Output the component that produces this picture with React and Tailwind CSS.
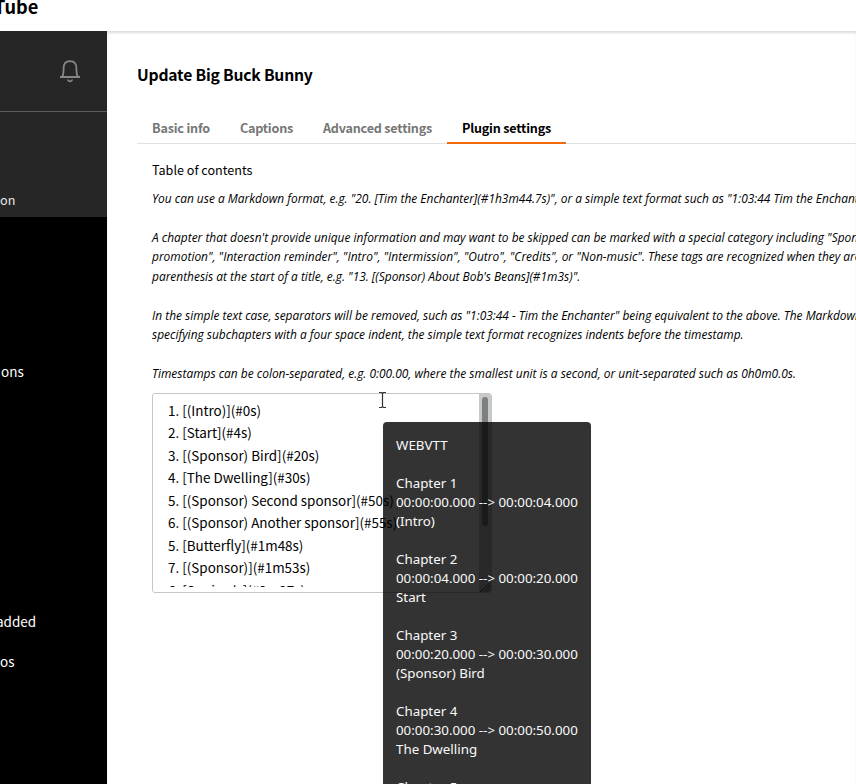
const tabs = [
  { label: "Basic info", width: "w-[88px]" },
  { label: "Captions", width: "w-[83px]" },
  { label: "Advanced settings", width: "w-[139px]" },
  { label: "Plugin settings", width: "w-[119px]", active: true },
];

const help = [
  { text: 'You can use a Markdown format, e.g. "20. [Tim the Enchanter](#1h3m44.7s)", or a simple text format such as "1:03:44 Tim the Enchanter".' },
  { text: "" },
  { text: 'A chapter that doesn\'t provide unique information and may want to be skipped can be marked with a special category including "Sponsor",' },
  { text: 'promotion", "Interaction reminder", "Intro", "Intermission", "Outro", "Credits", or "Non-music". These tags are recognized when they are' },
  { text: 'parenthesis at the start of a title, e.g. "13. [(Sponsor) About Bob\'s Beans](#1m3s)".' },
  { text: "" },
  { text: 'In the simple text case, separators will be removed, such as "1:03:44 - Tim the Enchanter" being equivalent to the above. The Markdown' },
  { text: "specifying subchapters with a four space indent, the simple text format recognizes indents before the timestamp." },
  { text: "" },
  { text: "Timestamps can be colon-separated, e.g. 0:00.00, where the smallest unit is a second, or unit-separated such as 0h0m0.0s." },
];

const chapters = [
  "1. [(Intro)](#0s)",
  "2. [Start](#4s)",
  "3. [(Sponsor) Bird](#20s)",
  "4. [The Dwelling](#30s)",
  "5. [(Sponsor) Second sponsor](#50s)",
  "6. [(Sponsor) Another sponsor](#55s)",
  "5. [Butterfly](#1m48s)",
  "7. [(Sponsor)](#1m53s)",
  "6. [Squirrels](#2m27s)",
];

const vtt = `WEBVTT

Chapter 1
00:00:00.000 --> 00:00:04.000
(Intro)

Chapter 2
00:00:04.000 --> 00:00:20.000
Start

Chapter 3
00:00:20.000 --> 00:00:30.000
(Sponsor) Bird

Chapter 4
00:00:30.000 --> 00:00:50.000
The Dwelling

Chapter 5`;

function Sidebar() {
  return (
    <aside className="flex w-[107px] shrink-0 flex-col bg-black text-[13.5px] text-white">
      <div className="h-[186px] bg-[#262626]">
        <div className="flex h-[81px] items-start justify-end border-b border-[#5c5c5c] pt-7 pr-[26px]">
          <svg width="22" height="24" viewBox="0 0 22 24" fill="none" stroke="#868686" strokeWidth="1.8">
            <path d="M1 18H21M3.2 17.6C4.6 15.5 4.6 13 4.6 9.5C4.6 5 7 2.2 11 2.2S17.4 5 17.4 9.5C17.4 13 17.4 15.5 18.8 17.6" />
            <path d="M8 20.6C8.5 24.2 13.5 24.2 14 20.6H12.4C12 21.9 10 21.9 9.6 20.6Z" fill="#868686" stroke="none" />
          </svg>
        </div>
        <div className="mt-[78px] h-5 text-[12.6px] leading-5 text-[#e6e6e6]">on</div>
      </div>
      <div className="mt-[144px] ml-[1px] h-5 leading-5">ons</div>
      <div className="mt-[230px] -ml-[4px] h-5 leading-5">added</div>
      <div className="mt-5 h-5 leading-5">os</div>
    </aside>
  );
}

function Editor() {
  return (
    <div className="relative ml-[15px] mt-[9px] flex h-[200px] w-[340px] overflow-hidden rounded-[3px] border border-[#c6c6c6] bg-white">
      <div className="mt-[5px] h-[188px] flex-1 overflow-hidden pl-[15px] text-[13.45px] leading-[22.5px] whitespace-pre">
        <div className="-mt-[0.5px]">
          {chapters.map((c) => (
            <div key={c}>{c}</div>
          ))}
        </div>
      </div>
      <div className="w-3 bg-[#c9c9c9] pt-[3px] pl-[3px]">
        <div className="h-[129px] w-1.5 rounded-full bg-[#7c8080]" />
      </div>
      <svg className="absolute right-0 bottom-0" width="11" height="9" viewBox="0 0 11 9" stroke="#444" strokeWidth="1">
        <path d="M0 9L10 0M3.5 9L10.5 2.5M7 9L10.5 5.5" />
      </svg>
    </div>
  );
}

export default function App() {
  return (
    <div className="relative flex h-[784px] w-[856px] flex-col overflow-hidden bg-white font-['Noto_Sans_CJK_SC',sans-serif] text-black">
      <header className="h-[31px] shrink-0">
        <div className="-ml-[6px] -mt-[6px] text-[18.2px] leading-6 font-bold">Tube</div>
      </header>
      <div className="flex min-h-0 flex-1">
        <Sidebar />
        <main className="min-w-0 flex-1 overflow-hidden pl-[30px] shadow-[inset_0_3px_3px_-1px_rgba(0,0,0,0.14)]">
          <h1 className="mt-8 h-6 text-[15.7px] leading-6 font-bold tracking-[-0.21px]">Update Big Buck Bunny</h1>
          <nav className="mt-[26px] flex h-[31px] border-b border-[#dee2e6]">
            {tabs.map((t) => (
              <div
                key={t.label}
                className={`${t.width} h-[31px] shrink-0 text-center text-[12.6px] leading-[29px] font-bold tracking-[-0.2px] whitespace-nowrap ${
                  t.active ? "border-b-2 border-[#f2690d] text-black" : "text-[#767676]"
                }`}
              >
                {t.label}
              </div>
            ))}
          </nav>
          <div className="mt-[15px] ml-[15px] h-[22px] text-[12.6px] leading-[22px]">Table of contents</div>
          <div className="mt-[7.5px] mb-[9.5px] ml-[15px] font-['Open_Sans',sans-serif] text-[13px] leading-[19.5px] whitespace-nowrap italic">
            {help.map((h, i) => (
              <div key={i} className="h-[19.5px] w-[820px] origin-left scale-x-[0.918]">
                {h.text}
              </div>
            ))}
          </div>
          <Editor />
        </main>
      </div>
      <svg className="absolute top-[391px] left-[378px]" width="9" height="18" viewBox="0 0 9 18" fill="none" stroke="#333" strokeWidth="1.2">
        <path d="M1 1.5H3.5L4.5 2.5L5.5 1.5H8M4.5 2.5V15.5M1 16.5H3.5L4.5 15.5L5.5 16.5H8" />
      </svg>
      <div className="absolute top-[422px] left-[383px] h-[380px] w-[208px] rounded-[4px] bg-black/80 pt-[14px] pl-[13px] font-['Noto_Sans',sans-serif] text-[13.33px] leading-[19px] whitespace-pre text-[#fafafa]">
        {vtt}
      </div>
    </div>
  );
}
